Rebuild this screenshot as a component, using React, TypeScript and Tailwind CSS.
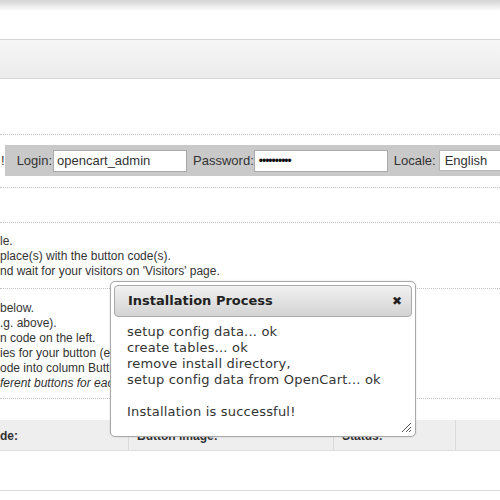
import React from "react";

export default function App() {
  return (
    <div className="relative w-[500px] h-[500px] overflow-hidden bg-white text-[#333] font-['Liberation_Sans',Arial,sans-serif]">
      {/* top shadow strip */}
      <div className="h-[39px] bg-[linear-gradient(to_bottom,#d4d4d4_0px,#dedede_3px,#ffffff_11px)]" />
      {/* gray band */}
      <div className="h-[40px] border-t border-b border-[#d6d6d6] bg-[linear-gradient(to_bottom,#f7f7f7,#ebebeb)]" />
      <div className="h-[56px] border-b border-dotted border-[#c4c4c4]" />

      {/* login row */}
      <div className="h-[53px] border-b border-dotted border-[#c4c4c4] pt-[10px] flex items-start">
        <span className="w-[7px] text-[13px] leading-[31px] pl-[1px]">!</span>
        <div className="flex-1 h-[31px] bg-[#c9c9c9] flex items-center pl-[12px] text-[13px] whitespace-nowrap">
          <span>Login:</span>
          <div className="ml-[1px] w-[134px] h-[22px] border border-[#a9a9a9] bg-white flex items-center pl-[3px] shrink-0">
            opencart_admin
          </div>
          <span className="ml-[6px]">Password:</span>
          <div className="ml-0 w-[134px] h-[22px] border border-[#a9a9a9] bg-white flex items-center pl-[4px] shrink-0 text-[12px] tracking-[-1px] text-[#111]">
            ••••••••••
          </div>
          <span className="ml-[6px]">Locale:</span>
          <div className="ml-[3px] w-[120px] h-[21px] border border-[#b5b5b5] bg-white flex items-center pl-[5px] shrink-0">
            English
          </div>
        </div>
      </div>

      <div className="h-[35px] border-b border-dotted border-[#c4c4c4]" />

      {/* instructions block 1 */}
      <div className="h-[66px] border-b border-dotted border-[#c4c4c4] pt-[11px] text-[12px] leading-[15px] whitespace-nowrap">
        <div>le.</div>
        <div>place(s) with the button code(s).</div>
        <div>nd wait for your visitors on &apos;Visitors&apos; page.</div>
      </div>

      {/* instructions block 2 */}
      <div className="h-[110px] border-b border-dotted border-[#c4c4c4] pt-[12px] text-[12px] leading-[15px] whitespace-nowrap">
        <div>below.</div>
        <div>.g. above).</div>
        <div>n code on the left.</div>
        <div>ies for your button (e.g. 'Live Chat' or 'Help').</div>
        <div>ode into column Button image.</div>
        <div className="italic">ferent buttons for each department.</div>
      </div>

      <div className="h-[21px]" />

      {/* table */}
      <div className="h-[71px] border-b border-[#dcdcdc]">
        <div className="h-[31px] bg-[#eeeeee] border-b border-[#dedede] flex text-[12px] font-bold leading-[31px] whitespace-nowrap">
          <div className="w-[129px] border-r border-[#dadada] pt-[1px]">de:</div>
          <div className="w-[205px] border-r border-[#dadada] pl-[8px] pt-[1px]">Button image:</div>
          <div className="w-[122px] border-r border-[#dadada] pl-[8px] pt-[1px]">Status:</div>
          <div className="flex-1" />
        </div>
      </div>

      {/* dialog */}
      <div className="absolute left-[110px] top-[281px] w-[306px] h-[156px] bg-white border border-[#a8a8a8] rounded-[5px] p-[3px] shadow-[0_0_2px_rgba(0,0,0,0.15)] font-['DejaVu_Sans',Verdana,sans-serif]">
        <div className="h-[32px] rounded-[4px] border border-[#aaaaaa] bg-[linear-gradient(to_bottom,#f1f1f1,#d3d3d3)] flex items-center justify-between pl-[13px] pr-[9px]">
          <span className="text-[13px] font-bold text-[#222]">Installation Process</span>
          <span className="text-[12px] text-[#222] leading-none">✖</span>
        </div>
        <div className="pt-[7px] pl-[13px] text-[13px] leading-[16px] tracking-[0.2px] text-[#333] whitespace-nowrap">
          <div>setup config data... ok</div>
          <div>create tables... ok</div>
          <div>remove install directory,</div>
          <div>setup config data from OpenCart... ok</div>
          <div>&nbsp;</div>
          <div>Installation is successful!</div>
        </div>
        <svg className="absolute right-[3px] bottom-[3px]" width="12" height="12" viewBox="0 0 12 12">
          <path d="M11 2 L2 11 M11 6 L6 11 M11 9 L9 11" stroke="#555" strokeWidth="1" fill="none" />
        </svg>
      </div>
    </div>
  );
}
